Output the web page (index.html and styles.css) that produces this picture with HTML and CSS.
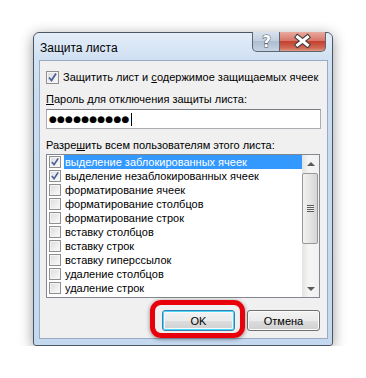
FILE: index.html
```html
<!DOCTYPE html>
<html lang="ru">
<head>
    <meta charset="UTF-8">
    <title>Защита листа</title>
    <link rel="stylesheet" href="styles.css">
</head>
<body>

    <div class="window">
        <!-- заголовок окна -->
        <div class="titlebar">
            <span class="title">Защита листа</span>
            <div class="caption-buttons">
                <div class="cap-btn help">
                    <svg width="27" height="19" viewBox="0 0 27 19">
                        <text x="13.5" y="15" text-anchor="middle" class="help-glyph">?</text>
                    </svg>
                </div>
                <div class="cap-btn close">
                    <svg width="46" height="19" viewBox="0 0 46 19">
                        <path d="M17.5 5 L27.5 13 M27.5 5 L17.5 13" class="x-outline"/>
                        <path d="M17.5 5 L27.5 13 M27.5 5 L17.5 13" class="x-fill"/>
                    </svg>
                </div>
            </div>
        </div>

        <div class="panel">
            <div class="check-row">
                <span class="checkbox checked">
                    <svg width="11" height="11" viewBox="0 0 11 11"><path d="M2 5.5 L4.5 8.5 L9 1.5" /></svg>
                </span>
                <span>Защитить лист и <u>с</u>одержимое защищаемых ячеек</span>
            </div>

            <div class="label"><u>П</u>ароль для отключения защиты листа:</div>
            <div class="password">
                <span class="dots">●●●●●●●●●●</span><span class="caret"></span>
            </div>

            <div class="label second">Разре<u>ш</u>ить всем пользователям этого листа:</div>

            <div class="listbox">
                <div class="rows">
                    <div class="row selected"><span class="checkbox checked"><svg width="10" height="10" viewBox="0 0 11 11"><path d="M2 5.5 L4.5 8.5 L9 1.5" /></svg></span><span class="row-text">выделение заблокированных ячеек</span></div>
                    <div class="row"><span class="checkbox checked"><svg width="10" height="10" viewBox="0 0 11 11"><path d="M2 5.5 L4.5 8.5 L9 1.5" /></svg></span><span class="row-text">выделение незаблокированных ячеек</span></div>
                    <div class="row"><span class="checkbox"></span><span class="row-text">форматирование ячеек</span></div>
                    <div class="row"><span class="checkbox"></span><span class="row-text">форматирование столбцов</span></div>
                    <div class="row"><span class="checkbox"></span><span class="row-text">форматирование строк</span></div>
                    <div class="row"><span class="checkbox"></span><span class="row-text">вставку столбцов</span></div>
                    <div class="row"><span class="checkbox"></span><span class="row-text">вставку строк</span></div>
                    <div class="row"><span class="checkbox"></span><span class="row-text">вставку гиперссылок</span></div>
                    <div class="row"><span class="checkbox"></span><span class="row-text">удаление столбцов</span></div>
                    <div class="row"><span class="checkbox"></span><span class="row-text">удаление строк</span></div>
                </div>
                <!-- полоса прокрутки -->
                <div class="scrollbar">
                    <div class="arrow up"></div>
                    <div class="thumb"><span class="grip"></span></div>
                    <div class="track"></div>
                    <div class="arrow down"></div>
                </div>
            </div>

            <div class="buttons">
                <div class="ok-wrap">
                    <button class="btn default">OK</button>
                    <span class="highlight"></span>
                </div>
                <button class="btn">Отмена</button>
            </div>
        </div>
    </div>

</body>
</html>
```

FILE: styles.css
```css
body {
    margin: 0;
    background-color: #fff;
    font-family: "Liberation Sans", Arial, sans-serif;
    font-size: 11px;
    line-height: 16px;
    color: #000;
    white-space: nowrap;
}
.window {
    margin: 32px 0 0 33px;
    width: 300px;
    box-sizing: border-box;
    border: 1px solid #4b5663;
    border-radius: 6px 6px 3px 3px;
    background: linear-gradient(to bottom, #dbe8f6 0px, #c9dcf1 60px, #c4d8ef 100%);
    box-shadow: 0 3px 14px rgba(0, 0, 0, 0.4);
}
.titlebar {
    display: flex;
    height: 27px;
    background: linear-gradient(to bottom, #e3edf8, #d0e0f2);
    border-radius: 6px 6px 0 0;
}
.title {
    padding: 7px 0 0 6px;
    font-size: 12px;
}
.caption-buttons {
    display: flex;
    margin-left: auto;
    margin-right: 6px;
    margin-top: -1px;
    height: 20px;
}
.cap-btn {
    box-sizing: border-box;
    height: 20px;
    border: 1px solid #5c6670;
    border-top: none;
}
.cap-btn svg {
    display: block;
}
.help {
    width: 28px;
    border-radius: 0 0 0 5px;
    background: linear-gradient(to bottom, #d8e2ee 0%, #c2cfdf 45%, #aebdd0 50%, #c6d3e3 100%);
}
.help-glyph {
    font-family: "DejaVu Sans", sans-serif;
    font-size: 15px;
    font-weight: bold;
    fill: #fff;
    stroke: #4b5563;
    stroke-width: 1;
    paint-order: stroke;
}
.close {
    width: 46px;
    border-left: none;
    border-radius: 0 0 5px 0;
    background: linear-gradient(to bottom, #e8aa9f 0%, #d8776a 45%, #c4412f 50%, #d06a55 85%, #e09c88 100%);
}
.x-outline {
    stroke: #3b3b3b;
    stroke-width: 5;
    stroke-linecap: square;
}
.x-fill {
    stroke: #fff;
    stroke-width: 3;
    stroke-linecap: square;
}

.panel {
    margin: 0 4px 6px 5px;
    padding: 0 6px 7px 6px;
    border: 1px solid #98abc0;
    background-color: #f0f0f0;
}
.check-row {
    display: flex;
    align-items: center;
    height: 16px;
    margin-top: 8px;
}
.check-row .checkbox {
    margin: 0 4px 0 0;
}
.checkbox {
    display: inline-flex;
    align-items: center;
    justify-content: center;
    box-sizing: border-box;
    width: 13px;
    height: 13px;
    border: 1px solid #8e8f8f;
    background: linear-gradient(135deg, #dcdcdc, #fbfbfb);
    box-shadow: inset 0 0 0 1px #f4f4f4;
}
.checkbox path {
    fill: none;
    stroke: #4a5f97;
    stroke-width: 1.8;
}
.label {
    height: 16px;
    margin-top: 6px;
}
.label.second {
    margin-top: 8px;
}
.password {
    display: flex;
    align-items: center;
    box-sizing: border-box;
    height: 20px;
    margin-top: 2px;
    padding-left: 2px;
    border: 1px solid #abadb3;
    border-top-color: #7a7d85;
    background-color: #fff;
}
.dots {
    font-family: "DejaVu Sans", sans-serif;
    font-size: 9px;
    letter-spacing: 0.2px;
}
.caret {
    width: 1px;
    height: 13px;
    background-color: #000;
    margin-left: 1px;
}

.listbox {
    display: flex;
    box-sizing: border-box;
    height: 144px;
    margin: 1px 1px 0 0;
    border: 1px solid #828790;
    background-color: #fff;
}
.rows {
    flex: 1;
}
.row {
    display: flex;
    align-items: center;
    height: 14px;
    padding-left: 2px;
}
.row .checkbox {
    width: 12px;
    height: 12px;
    margin-right: 3px;
}
.row-text {
    flex: 1;
    height: 14px;
    line-height: 14px;
    padding-left: 1px;
}
.row.selected .row-text {
    background-color: #3399ff;
    color: #fff;
}
.scrollbar {
    display: flex;
    flex-direction: column;
    width: 17px;
    background: linear-gradient(to right, #e3e3e3, #f5f5f5 40%, #f0f0f0);
}
.arrow {
    height: 17px;
    display: flex;
    align-items: center;
    justify-content: center;
}
.arrow::before {
    content: "";
    border-left: 4px solid transparent;
    border-right: 4px solid transparent;
}
.arrow.up::before {
    border-bottom: 4px solid #5a5a5a;
}
.arrow.down::before {
    border-top: 4px solid #5a5a5a;
}
.thumb {
    display: flex;
    align-items: center;
    justify-content: center;
    box-sizing: border-box;
    height: 71px;
    margin: 1px 1px 0 0;
    border: 1px solid #979797;
    border-radius: 2px;
    background: linear-gradient(to right, #f2f2f2, #e5e5e5 50%, #d4d4d4);
}
.grip {
    width: 7px;
    height: 7px;
    background: repeating-linear-gradient(to bottom, #5c5c5c 0, #5c5c5c 1px, #eee 1px, #eee 2px);
}
.track {
    flex: 1;
}

.buttons {
    display: flex;
    justify-content: flex-end;
    gap: 12px;
    margin: 12px 1px 0 0;
}
.ok-wrap {
    position: relative;
}
.btn {
    display: block;
    box-sizing: border-box;
    width: 73px;
    height: 21px;
    padding: 0;
    font-family: "Liberation Sans", Arial, sans-serif;
    font-size: 11px;
    color: #000;
    border: 1px solid #707070;
    border-radius: 3px;
    background: linear-gradient(to bottom, #f2f2f2 0%, #ebebeb 50%, #dddddd 51%, #cfcfcf 100%);
    box-shadow: inset 0 0 0 1px #fcfcfc;
}
.btn.default {
    border-color: #3c7fb1;
    box-shadow: inset 0 0 0 1px #48d7fb, inset 0 0 0 2px #f8f8f8;
}
/* красная рамка выделения */
.highlight {
    position: absolute;
    left: -12px;
    top: -10px;
    width: 95px;
    height: 38px;
    box-sizing: border-box;
    border: 5px solid #e8000b;
    border-radius: 11px;
    box-shadow: 0 1px 4px rgba(0, 0, 0, 0.45);
}
```
